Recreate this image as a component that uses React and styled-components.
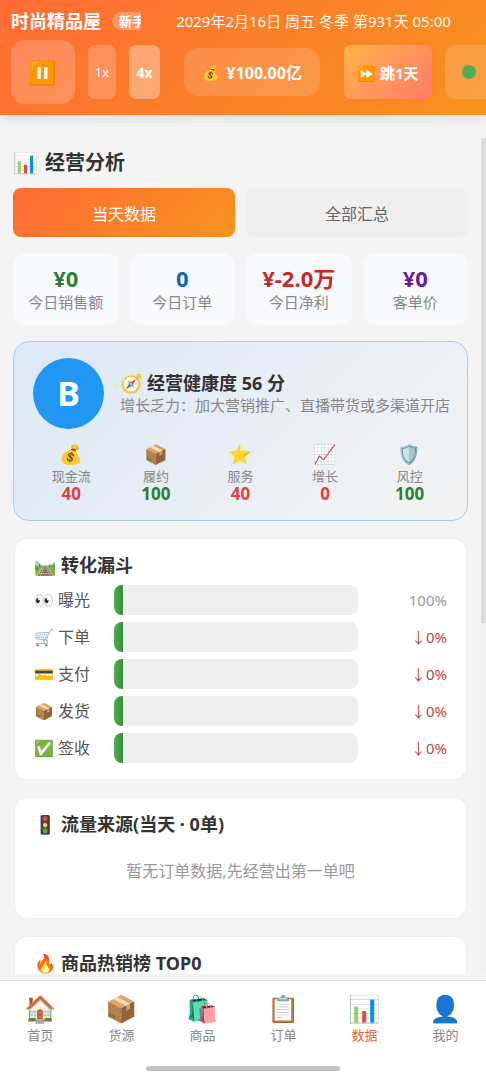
import React from "react";
import styled, { createGlobalStyle, css } from "styled-components";

const GlobalStyle = createGlobalStyle`
  *, *::before, *::after { box-sizing: border-box; }
  body {
    margin: 0;
    background: #f4f4f4;
    color: #333;
    font-family: "Noto Sans", "Noto Sans CJK SC", "Noto Color Emoji", sans-serif;
    font-size: 16px;
  }
  button { font: inherit; border: 0; margin: 0; padding: 0; cursor: pointer; }
  h1, h2, p, ul, dl, dd { margin: 0; padding: 0; }
  ul { list-style: none; }
`;

const Shell = styled.div`
  display: flex;
  flex-direction: column;
  height: 100vh;
  overflow: hidden;
`;

const Header = styled.header`
  position: relative;
  z-index: 1;
  flex: none;
  padding: 10px 0 11px 11px;
  overflow: hidden;
  color: #fff;
  background: linear-gradient(135deg, #ff6b35 0%, #f7931e 100%);
  box-shadow: 0 2px 10px rgba(0, 0, 0, 0.12);
`;

const HeaderTop = styled.div`
  display: flex;
  align-items: center;
  height: 22px;
  margin-bottom: 8px;
  white-space: nowrap;
`;

const ShopInfo = styled.div`
  display: flex;
  align-items: center;
  gap: 11px;
  width: 130px;
  flex: none;
  overflow: hidden;
`;

const ShopName = styled.strong`
  font-size: 18px;
  line-height: 22px;
  flex: none;
`;

const LevelTag = styled.span`
  flex: none;
  padding: 0 7px;
  border-radius: 9px;
  background: rgba(255, 255, 255, 0.25);
  font-size: 13px;
  font-weight: 700;
  line-height: 18px;
`;

const GameTime = styled.time`
  flex: 1;
  text-align: center;
  font-size: 15px;
  line-height: 22px;
  opacity: 0.95;
`;

const Controls = styled.div`
  display: flex;
  align-items: center;
  gap: 13px;
  white-space: nowrap;
`;

const PauseButton = styled.button`
  flex: none;
  width: 64px;
  height: 64px;
  border-radius: 14px;
  background: rgba(255, 255, 255, 0.2);
  color: #fff;
  font-size: 23px;
  line-height: 32px;
`;

const SpeedButton = styled.button`
  flex: none;
  width: ${(p) => (p.$active ? 31 : 28)}px;
  height: 54px;
  border-radius: 7px;
  color: #fff;
  font-size: ${(p) => (p.$active ? 14 : 13)}px;
  font-weight: ${(p) => (p.$active ? 700 : 400)};
  background: rgba(255, 255, 255, ${(p) => (p.$active ? 0.35 : 0.2)});
`;

const Balance = styled.div`
  flex: none;
  display: flex;
  align-items: center;
  justify-content: center;
  gap: 7px;
  width: 136px;
  height: 48px;
  margin: 0 11px;
  border-radius: 14px;
  background: rgba(255, 255, 255, 0.15);
  font-size: 16px;
  font-weight: 700;
`;

const BalanceIcon = styled.span`
  font-size: 14px;
`;

const SkipButton = styled.button`
  flex: none;
  width: 88px;
  height: 54px;
  border-radius: 7px;
  color: #fff;
  font-size: 15px;
  font-weight: 700;
  background: linear-gradient(135deg, #ffb347, #ff7b6b);
  box-shadow: 0 2px 6px rgba(255, 107, 53, 0.2);
`;

const StatusButton = styled.button`
  flex: none;
  display: flex;
  align-items: center;
  width: 72px;
  height: 54px;
  padding-left: 17px;
  border-radius: 10px;
  background: rgba(255, 255, 255, 0.15);
`;

const StatusDot = styled.span`
  width: 14px;
  height: 14px;
  border-radius: 50%;
  background: #4caf50;
`;

const Body = styled.div`
  position: relative;
  flex: 1;
  min-height: 0;
  margin-bottom: 6px;
  overflow: hidden;
`;

const Content = styled.main`
  height: 100%;
  overflow: hidden;
  padding: 34px 18px 0 13px;
`;

const ScrollTrack = styled.div`
  position: absolute;
  top: 23px;
  right: 0;
  bottom: 0;
  width: 5px;
  background: #f1f1f1;
`;

const ScrollThumb = styled.div`
  height: 58%;
  background: #dcdcdc;
`;

const PageTitle = styled.h1`
  display: flex;
  gap: 7px;
  height: 28px;
  margin-bottom: 11px;
  font-size: 20px;
  line-height: 28px;
`;

const Tabs = styled.div`
  display: grid;
  grid-template-columns: 1fr 1fr;
  gap: 11px;
  margin-bottom: 16px;
`;

const Tab = styled.button`
  height: 49px;
  border-radius: 8px;
  color: #666;
  background: #efefef;
  ${(p) =>
    p.$active &&
    css`
      color: #fff;
      background: linear-gradient(135deg, #ff6b35, #f7931e);
    `}
`;

const Stats = styled.dl`
  display: grid;
  grid-template-columns: repeat(4, 1fr);
  gap: 11px;
  margin-bottom: 16px;
`;

const Stat = styled.div`
  display: flex;
  flex-direction: column-reverse;
  justify-content: center;
  height: 72px;
  border-radius: 12px;
  text-align: center;
  white-space: nowrap;
  background: #f8f9fc;
`;

const StatLabel = styled.dt`
  color: #888;
  font-size: 15px;
  line-height: 22px;
`;

const StatValue = styled.dd`
  color: ${(p) => p.$color};
  font-size: 22px;
  font-weight: 700;
  line-height: 25px;
`;

const Health = styled.section`
  height: 180px;
  margin-bottom: 17px;
  padding: 16px 19px;
  border: 1px solid #a9cff0;
  border-radius: 16px;
  background: linear-gradient(135deg, #dae9f5 0%, #e8eef5 50%, #f3f3f3 100%);
`;

const HealthTop = styled.div`
  display: flex;
  align-items: center;
  gap: 16px;
  margin-bottom: 13px;
  white-space: nowrap;
`;

const Grade = styled.div`
  flex: none;
  width: 71px;
  height: 71px;
  border-radius: 50%;
  color: #fff;
  background: #2196f3;
  font-size: 34px;
  font-weight: 700;
  line-height: 71px;
  text-align: center;
`;

const HealthTitle = styled.h2`
  font-size: 18px;
  line-height: 22px;
`;

const HealthTip = styled.p`
  color: #888;
  font-size: 15px;
  line-height: 22px;
`;

const Metrics = styled.ul`
  display: grid;
  grid-template-columns: repeat(5, 1fr);
  gap: 8px;
`;

const Metric = styled.li`
  display: flex;
  flex-direction: column;
  align-items: center;
`;

const MetricIcon = styled.span`
  height: 25px;
  font-size: 19px;
  line-height: 25px;
`;

const MetricLabel = styled.span`
  color: #888;
  font-size: 13px;
  line-height: 18px;
`;

const MetricValue = styled.strong`
  color: ${(p) => (p.$good ? "#2e7d32" : "#e53e3e")};
  font-size: 17px;
  line-height: 18px;
`;

const Card = styled.section`
  margin: 0 1px 17px;
  padding: 13px 19px 16px;
  border: 1px solid #eeeeee;
  border-radius: 13px;
  background: #fff;
`;

const CardTitle = styled.h2`
  height: 26px;
  margin-bottom: 7px;
  font-size: 18px;
  line-height: 26px;
`;

const Funnel = styled.ul`
  display: grid;
  gap: 7px;
`;

const FunnelRow = styled.li`
  display: grid;
  grid-template-columns: 80px 1fr 89px;
  align-items: center;
  height: 30px;
`;

const FunnelLabel = styled.span`
  color: #555;
  line-height: 30px;
`;

const FunnelTrack = styled.div`
  height: 30px;
  overflow: hidden;
  border-radius: 8px;
  background: #efefef;
`;

const FunnelFill = styled.div`
  width: 9px;
  height: 100%;
  background: linear-gradient(90deg, #4caf50, #388e3c);
`;

const FunnelRate = styled.span`
  color: ${(p) => (p.$drop ? "#c94040" : "#999")};
  font-size: 15px;
  line-height: 30px;
  text-align: right;
`;

const Empty = styled.p`
  padding: 12px 0 16px;
  color: #999;
  line-height: 30px;
  text-align: center;
`;

const BottomNav = styled.nav`
  flex: none;
  padding: 11px 0 9px;
  border-top: 1px solid #ddd;
  background: #fff;
`;

const NavList = styled.ul`
  display: grid;
  grid-template-columns: repeat(6, 1fr);
  margin-bottom: 21px;
`;

const NavLink = styled.a`
  display: flex;
  flex-direction: column;
  align-items: center;
  color: ${(p) => (p.$active ? "#e8642f" : "#888")};
  font-size: 13px;
  line-height: 20px;
  text-decoration: none;
`;

const NavIcon = styled.span`
  font-size: 26px;
  height: 33px;
  line-height: 33px;
`;

const HomeBar = styled.div`
  width: 40%;
  height: 5px;
  margin: 0 auto;
  border-radius: 3px;
  background: #c2c2c2;
`;

const stats = [
  { label: "今日销售额", value: "¥0", color: "#2e7d32" },
  { label: "今日订单", value: "0", color: "#1565c0" },
  { label: "今日净利", value: "¥-2.0万", color: "#c62828" },
  { label: "客单价", value: "¥0", color: "#6a1b9a" },
];

const metrics = [
  { icon: "💰", label: "现金流", value: 40 },
  { icon: "📦", label: "履约", value: 100 },
  { icon: "⭐", label: "服务", value: 40 },
  { icon: "📈", label: "增长", value: 0 },
  { icon: "🛡️", label: "风控", value: 100 },
];

const funnel = [
  { label: "👀 曝光", rate: "100%" },
  { label: "🛒 下单", rate: "↓0%", drop: true },
  { label: "💳 支付", rate: "↓0%", drop: true },
  { label: "📦 发货", rate: "↓0%", drop: true },
  { label: "✅ 签收", rate: "↓0%", drop: true },
];

const navItems = [
  { icon: "🏠", label: "首页" },
  { icon: "📦", label: "货源" },
  { icon: "🛍️", label: "商品" },
  { icon: "📋", label: "订单" },
  { icon: "📊", label: "数据", active: true },
  { icon: "👤", label: "我的" },
];

export default function App() {
  return (
    <Shell>
      <GlobalStyle />
      <Header>
        <HeaderTop>
          <ShopInfo>
            <ShopName>时尚精品屋</ShopName>
            <LevelTag>新手</LevelTag>
          </ShopInfo>
          <GameTime>2029年2月16日 周五 冬季 第931天 05:00</GameTime>
        </HeaderTop>
        <Controls>
          <PauseButton type="button">⏸️</PauseButton>
          <SpeedButton type="button">1x</SpeedButton>
          <SpeedButton type="button" $active>4x</SpeedButton>
          <Balance>
            <BalanceIcon>💰</BalanceIcon>
            <span>¥100.00亿</span>
          </Balance>
          <SkipButton type="button">⏩ 跳1天</SkipButton>
          <StatusButton type="button" aria-label="状态">
            <StatusDot />
          </StatusButton>
        </Controls>
      </Header>

      <Body>
        <Content>
          <PageTitle>
            <span>📊</span>
            <span>经营分析</span>
          </PageTitle>
          <Tabs>
            <Tab type="button" $active>当天数据</Tab>
            <Tab type="button">全部汇总</Tab>
          </Tabs>
          <Stats>
            {stats.map((s) => (
              <Stat key={s.label}>
                <StatLabel>{s.label}</StatLabel>
                <StatValue $color={s.color}>{s.value}</StatValue>
              </Stat>
            ))}
          </Stats>

          <Health>
            <HealthTop>
              <Grade>B</Grade>
              <div>
                <HealthTitle>🧭 经营健康度 56 分</HealthTitle>
                <HealthTip>增长乏力：加大营销推广、直播带货或多渠道开店</HealthTip>
              </div>
            </HealthTop>
            <Metrics>
              {metrics.map((m) => (
                <Metric key={m.label}>
                  <MetricIcon>{m.icon}</MetricIcon>
                  <MetricLabel>{m.label}</MetricLabel>
                  <MetricValue $good={m.value >= 60}>{m.value}</MetricValue>
                </Metric>
              ))}
            </Metrics>
          </Health>

          <Card>
            <CardTitle>🛤️ 转化漏斗</CardTitle>
            <Funnel>
              {funnel.map((f) => (
                <FunnelRow key={f.label}>
                  <FunnelLabel>{f.label}</FunnelLabel>
                  <FunnelTrack>
                    <FunnelFill />
                  </FunnelTrack>
                  <FunnelRate $drop={f.drop}>{f.rate}</FunnelRate>
                </FunnelRow>
              ))}
            </Funnel>
          </Card>

          <Card>
            <CardTitle>🚦 流量来源(当天 · 0单)</CardTitle>
            <Empty>暂无订单数据,先经营出第一单吧</Empty>
          </Card>

          <Card>
            <CardTitle>🔥 商品热销榜 TOP0</CardTitle>
          </Card>
        </Content>
        <ScrollTrack>
          <ScrollThumb />
        </ScrollTrack>
      </Body>

      <BottomNav>
        <NavList>
          {navItems.map((n) => (
            <li key={n.label}>
              <NavLink href="#" $active={n.active}>
                <NavIcon>{n.icon}</NavIcon>
                {n.label}
              </NavLink>
            </li>
          ))}
        </NavList>
        <HomeBar />
      </BottomNav>
    </Shell>
  );
}
